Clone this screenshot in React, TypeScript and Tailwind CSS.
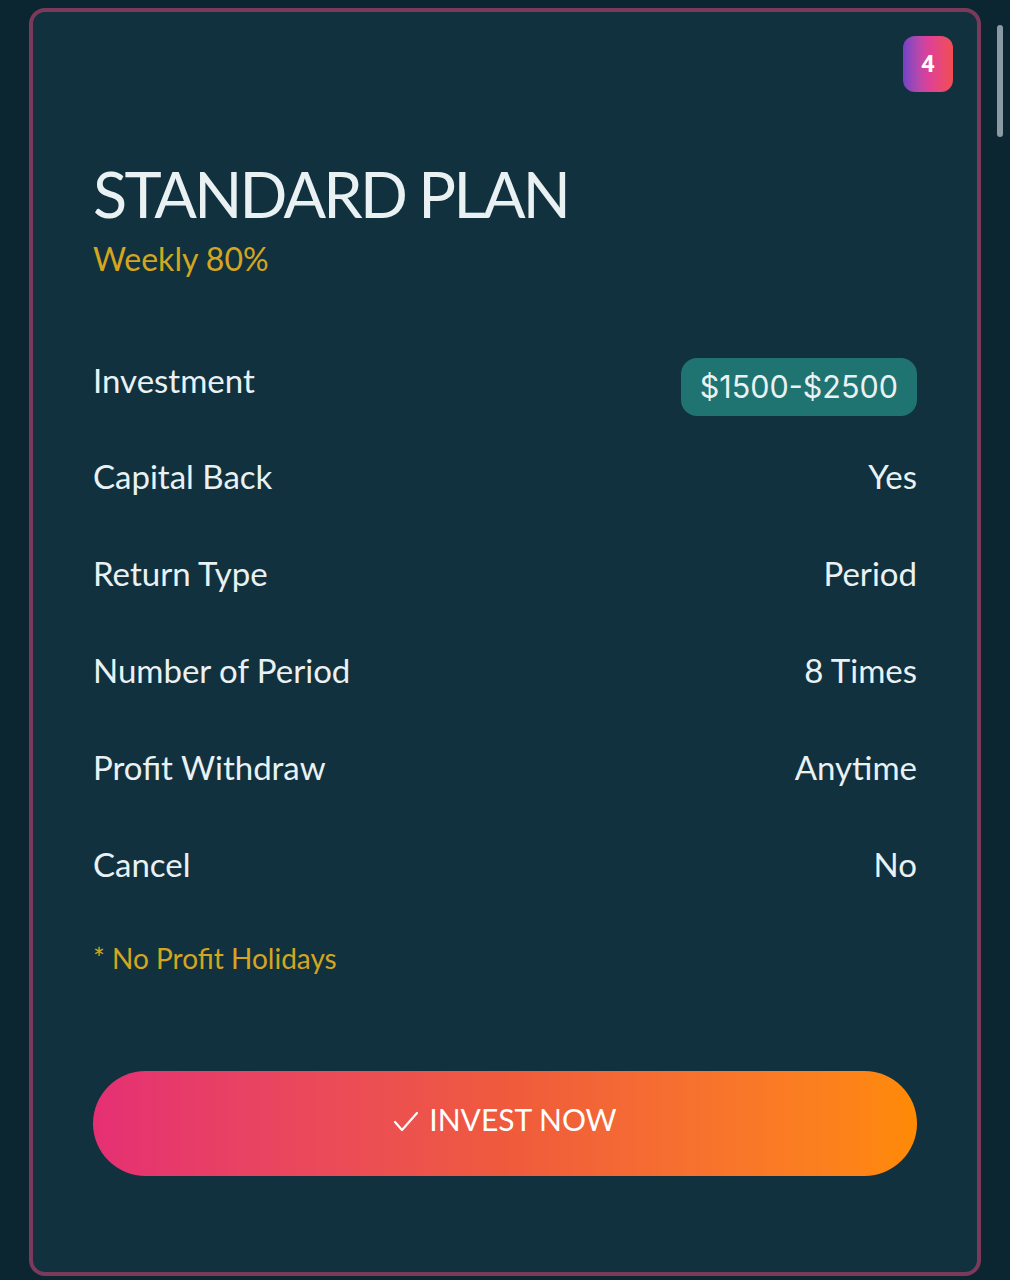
import React from "react";

const rows = [
  { label: "Capital Back", value: "Yes" },
  { label: "Return Type", value: "Period" },
  { label: "Number of Period", value: "8 Times" },
  { label: "Profit Withdraw", value: "Anytime" },
  { label: "Cancel", value: "No" },
];

export default function App() {
  return (
    <div className="relative min-h-[1280px] w-full bg-[#0b2531] pt-[8px] pl-[29px] pr-[29px] font-['Lato',sans-serif]">
      {/* fake page scrollbar */}
      <div className="absolute right-[7px] top-[25px] h-[112px] w-[6px] rounded-full bg-[#8a9ba3]" />

      <div className="relative h-[1268px] rounded-[16px] border-[4px] border-[#7b3a5c] bg-[#11313f] px-[60px] pt-[150px]">
        <span className="absolute right-[24px] top-[24px] flex h-[56px] w-[50px] items-center justify-center rounded-[12px] bg-gradient-to-r from-[#7440c8] via-[#de3f98] to-[#f24d4f] font-['Roboto',sans-serif] text-[24px] font-bold text-white">
          4
        </span>

        <h1 className="text-[63px] leading-[64px] font-normal tracking-[-2.8px] text-[#eaf1f3]">STANDARD PLAN</h1>
        <p className="mt-[15px] text-[32px] leading-[36px] text-[#d4a620]">Weekly 80%</p>

        <div className="mt-[81px] flex h-[58px] items-center justify-between">
          <span className="-mt-[12px] text-[33px] text-[#eaf1f3]">Investment</span>
          <span className="flex h-[58px] items-center rounded-[16px] bg-[#1f7370] px-[19px] font-['Inter',sans-serif] text-[30.5px] text-[#eaf1f3]">
            $1500-$2500
          </span>
        </div>

        <div className="mt-[-7px]">
          {rows.map((r) => (
            <div key={r.label} className="mt-[38px] flex h-[59px] items-center justify-between text-[33px] text-[#eaf1f3]">
              <span>{r.label}</span>
              <span>{r.value}</span>
            </div>
          ))}
        </div>

        <p className="mt-[48px] text-[28px] leading-[32px] text-[#d4a620]">* No Profit Holidays</p>

        <button className="mt-[97px] flex h-[105px] w-full items-center justify-center gap-[10px] rounded-full bg-gradient-to-r from-[#e52f73] via-[#ef5a3c] to-[#ff8a04] pb-[8px] text-[30px] text-white">
          <svg width="26" height="22" viewBox="0 0 26 22" fill="none" stroke="white" strokeWidth="2.2" strokeLinecap="round" strokeLinejoin="round" className="mt-[4px]">
            <path d="M2 11 L9 19 L24 2" />
          </svg>
          <span>INVEST NOW</span>
        </button>
      </div>
    </div>
  );
}
